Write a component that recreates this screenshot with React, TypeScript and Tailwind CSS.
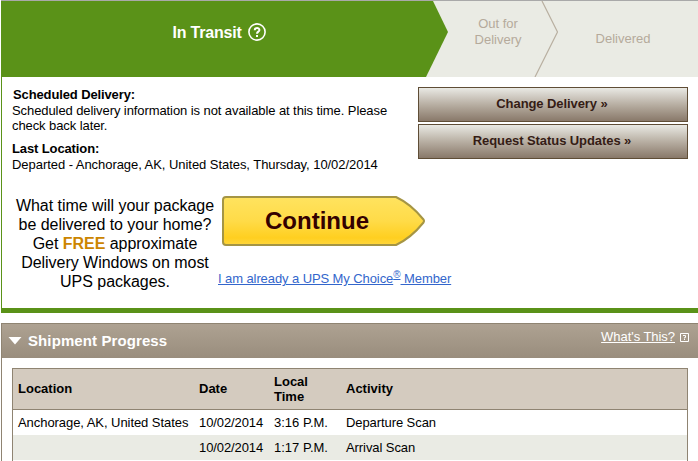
interface Scan {
  location: string;
  date: string;
  time: string;
  activity: string;
}

const scans: Scan[] = [
  { location: 'Anchorage, AK, United States', date: '10/02/2014', time: '3:16 P.M.', activity: 'Departure Scan' },
  { location: '', date: '10/02/2014', time: '1:17 P.M.', activity: 'Arrival Scan' },
];

const columns = 'grid grid-cols-[181px_75px_72px_1fr] pl-[5px]';

const StatusBar = () => (
  <div className="relative h-[77px] border-t border-[#a9a9a9] bg-[#eaebe4] ml-px">
    <svg className="absolute left-0 top-0" width="697" height="76" viewBox="0 0 697 76">
      <path d="M0 0H432L447 31L425 76H0Z" fill="#5a9218" />
      <path d="M541 0L556.5 31L534 76" fill="none" stroke="#b9b0a1" strokeWidth="1.2" />
    </svg>
    <div className="relative flex h-full">
      <div className="flex w-[436px] h-[62px] items-center justify-center gap-1.5 text-[16px] font-bold text-white">
        <span className="tracking-[-0.2px]">In Transit</span>
        <svg width="18" height="18" viewBox="0 0 18 18" fill="none" stroke="#fff">
          <circle cx="9" cy="9" r="8.1" strokeWidth="1.6" />
          <path d="M6.7 7.2C6.7 4.2 11.4 4.3 11.4 6.9C11.4 8.7 9 8.6 9 10.7M9 12V14" strokeWidth="2" />
        </svg>
      </div>
      <div className="w-[122px] pt-[15px] text-center leading-4 text-[#b5aa9b]">
        Out for
        <br />
        Delivery
      </div>
      <div className="w-[128px] pt-[30px] text-center leading-4 text-[#b5aa9b]">Delivered</div>
    </div>
  </div>
);

const ActionButton = ({ label }: { label: string }) => (
  <button className="block h-[35px] w-[270px] border border-[#5f4d36] bg-linear-to-b from-[#e9e9e4] via-[#b8afa3] to-[#89796a] pb-0.5 pr-0.5 text-[13px] font-bold tracking-[-0.08px] text-[#351c15]">
    {label} »
  </button>
);

const ContinueButton = () => (
  <button className="relative block h-[50px] w-[203px]">
    <svg className="absolute left-0 top-0" width="203" height="50" viewBox="0 0 203 50">
      <defs>
        <linearGradient id="gold" x1="0" y1="0" x2="0" y2="1">
          <stop offset="0" stopColor="#ffe35f" />
          <stop offset=".5" stopColor="#ffdb48" />
          <stop offset=".85" stopColor="#ffcf20" />
          <stop offset="1" stopColor="#ffd63c" />
        </linearGradient>
      </defs>
      <path
        d="M4 1H174Q189 8 201.5 23.5Q202.5 25 201.5 26.5Q189 42 174 49H4Q1 49 1 46V4Q1 1 4 1Z"
        fill="url(#gold)"
        stroke="#a59544"
        strokeWidth="2"
      />
    </svg>
    <span className="relative block pr-[13px] text-center text-[24px] leading-[50px] font-bold text-[#330000]">Continue</span>
  </button>
);

const ShipmentProgress = () => (
  <section className="mt-[10px] ml-px h-[138px] border-t border-l border-[#8f8472]">
    <div className="flex h-[34px] justify-between bg-linear-to-b from-[#aea292] to-[#998d7d] pl-1.5 pr-[9px] text-white">
      <h2 className="flex items-center gap-1.5 pb-px text-[15px] font-bold tracking-[0.1px]">
        <svg className="mt-px" width="14" height="8" viewBox="0 0 14 8">
          <path d="M0.5 0H13.5L7 7.5Z" fill="#fff" />
        </svg>
        Shipment Progress
      </h2>
      <div className="flex gap-[5px] pt-[5px]">
        <a className="text-[13px] leading-[15px] tracking-[-0.05px] underline" href="#">What's This?</a>
        <svg className="mt-1" width="9" height="9" viewBox="0 0 9 9" fill="none" stroke="#fff">
          <path d="M.5 .5H8.5V8.5H.5ZM3 2.5H5.5V4.5H4.5V5.5M4.5 6V7" />
        </svg>
      </div>
    </div>
    <div className="mt-[10px] ml-[10px] h-[93px] w-[676px] border-x border-t border-[#8f8472]">
      <div className={`${columns} h-[41px] items-center border-b border-[#8f8472] bg-[#d4cbbf] font-bold`}>
        <span className="pb-0.5">Location</span>
        <span className="pb-0.5">Date</span>
        <span>
          Local
          <br />
          Time
        </span>
        <span className="pb-0.5">Activity</span>
      </div>
      {scans.map(scan => (
        <div key={scan.time} className={`${columns} h-[25px] items-center pb-px even:bg-white odd:bg-[#eaebe4]`}>
          <span className="tracking-[-0.06px]">{scan.location}</span>
          <span className="tracking-[-0.1px]">{scan.date}</span>
          <span>{scan.time}</span>
          <span className="tracking-[-0.08px]">{scan.activity}</span>
        </div>
      ))}
    </div>
  </section>
);

export default function App() {
  return (
    <div className="h-[461px] w-[698px] overflow-hidden bg-white font-['Liberation_Sans',Arial,sans-serif] text-[13px] leading-[15px] text-black">
      <StatusBar />
      <div className="ml-px h-[236px] border-b-5 border-l border-b-[#5a9218] border-l-[#5a9218]">
        <div className="flex h-[119px] justify-between pt-[10px] pl-[10px] pr-[10px]">
          <div className="w-[385px]">
            <p className="pl-px font-bold leading-4 tracking-[-0.12px]">Scheduled Delivery:</p>
            <p className="tracking-[-0.085px]">
              Scheduled delivery information is not available at this time. Please check back later.
            </p>
            <p className="mt-2 font-bold leading-4 tracking-[-0.12px]">Last Location:</p>
            <p className="tracking-[-0.05px]">Departed - Anchorage, AK, United States, Thursday, 10/02/2014</p>
          </div>
          <div className="flex flex-col gap-0.5">
            <ActionButton label="Change Delivery" />
            <ActionButton label="Request Status Updates" />
          </div>
        </div>
        <div className="flex pl-[10px]">
          <p className="w-[206px] text-center text-[16px] leading-[19px] tracking-[-0.04px]">
            What time will your package
            <br />
            be delivered to your home?
            <br />
            Get <b className="text-[#cc8500]">FREE</b> approximate
            <br />
            Delivery Windows on most
            <br />
            UPS packages.
          </p>
          <div>
            <div className="pl-1">
              <ContinueButton />
            </div>
            <a className="mt-[25px] block whitespace-nowrap tracking-[-0.09px] text-[#3366cc] underline" href="#">
              I am already a UPS My Choice<sup className="inline-block text-[10px] leading-[10px] underline">®</sup> Member
            </a>
          </div>
        </div>
      </div>
      <ShipmentProgress />
    </div>
  );
}
